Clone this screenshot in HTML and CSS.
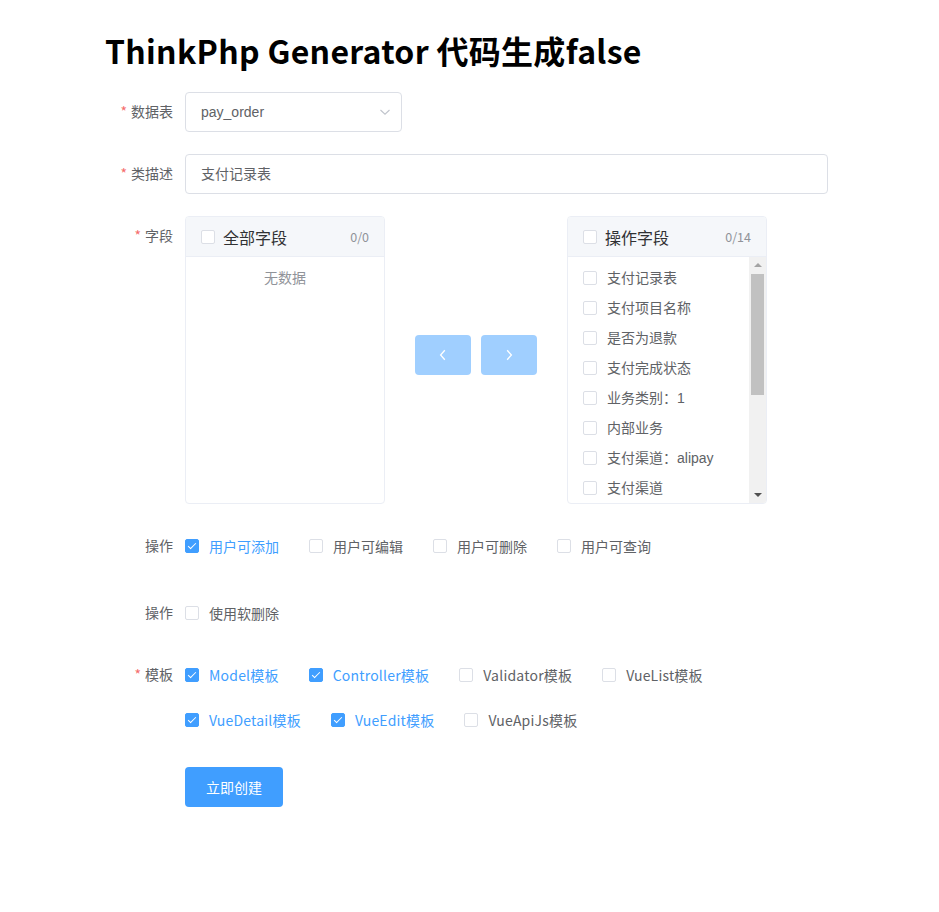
FILE: index.html
```html
<!DOCTYPE html>
<html>
<head>
<meta charset="utf-8">
<link rel="stylesheet" href="styles.css">
</head>
<body>
<div class="page">
  <h1 class="title">ThinkPhp Generator 代码生成false</h1>
  <form class="form">
    <div class="item">
      <label class="label"><span class="req">*</span>数据表</label>
      <div class="content">
        <div class="select">
          <span class="select-text">pay_order</span>
          <svg class="select-arrow" width="14" height="14" viewBox="0 0 14 14"><path d="M2.5 5 L7 9.2 L11.5 5" fill="none" stroke="#c0c4cc" stroke-width="1.1"/></svg>
        </div>
      </div>
    </div>
    <div class="item">
      <label class="label"><span class="req">*</span>类描述</label>
      <div class="content">
        <div class="input">支付记录表</div>
      </div>
    </div>
    <div class="item">
      <label class="label"><span class="req">*</span>字段</label>
      <div class="content">
        <div class="transfer">
          <div class="panel">
            <div class="panel-head">
              <span class="cb"></span><span class="head-title">全部字段</span><span class="count">0/0</span>
            </div>
            <div class="panel-body empty">无数据</div>
          </div>
          <div class="transfer-btns">
            <span class="tbtn"><svg width="14" height="14" viewBox="0 0 14 14"><path d="M8.8 2.3 L4.6 7 L8.8 11.7" fill="none" stroke="#fff" stroke-width="1.3"/></svg></span>
            <span class="tbtn"><svg width="14" height="14" viewBox="0 0 14 14"><path d="M5.2 2.3 L9.4 7 L5.2 11.7" fill="none" stroke="#fff" stroke-width="1.3"/></svg></span>
          </div>
          <div class="panel">
            <div class="panel-head">
              <span class="cb"></span><span class="head-title">操作字段</span><span class="count">0/14</span>
            </div>
            <div class="panel-body list">
              <div class="li"><span class="cb"></span>支付记录表</div>
              <div class="li"><span class="cb"></span>支付项目名称</div>
              <div class="li"><span class="cb"></span>是否为退款</div>
              <div class="li"><span class="cb"></span>支付完成状态</div>
              <div class="li"><span class="cb"></span>业务类别：1</div>
              <div class="li"><span class="cb"></span>内部业务</div>
              <div class="li"><span class="cb"></span>支付渠道：alipay</div>
              <div class="li"><span class="cb"></span>支付渠道</div>
              <div class="scrollbar">
                <span class="sb-arrow up"></span>
                <span class="sb-thumb"></span>
                <span class="sb-arrow down"></span>
              </div>
            </div>
          </div>
        </div>
      </div>
    </div>
    <div class="item item-ops">
      <label class="label">操作</label>
      <div class="content group">
        <span class="check on"><span class="cb on"></span>用户可添加</span>
        <span class="check"><span class="cb"></span>用户可编辑</span>
        <span class="check"><span class="cb"></span>用户可删除</span>
        <span class="check"><span class="cb"></span>用户可查询</span>
      </div>
    </div>
    <div class="item">
      <label class="label">操作</label>
      <div class="content group">
        <span class="check"><span class="cb"></span>使用软删除</span>
      </div>
    </div>
    <div class="item item-tpl">
      <label class="label"><span class="req">*</span>模板</label>
      <div class="content group wrap">
        <div class="row">
          <span class="check on"><span class="cb on"></span>Model模板</span>
          <span class="check on"><span class="cb on"></span>Controller模板</span>
          <span class="check"><span class="cb"></span>Validator模板</span>
          <span class="check"><span class="cb"></span>VueList模板</span>
        </div>
        <div class="row">
          <span class="check on"><span class="cb on"></span>VueDetail模板</span>
          <span class="check on"><span class="cb on"></span>VueEdit模板</span>
          <span class="check"><span class="cb"></span>VueApiJs模板</span>
        </div>
      </div>
    </div>
    <div class="item">
      <label class="label"></label>
      <div class="content">
        <span class="btn">立即创建</span>
      </div>
    </div>
  </form>
</div>
</body>
</html>
```
FILE: styles.css
```css
* { box-sizing: border-box; }
body {
  margin: 0;
  background: #fff;
  font-family: "Liberation Sans", "Noto Sans CJK SC", sans-serif;
  color: #606266;
  font-size: 14px;
}
.page {
  margin-left: 105px;
  width: 723px;
}
.title {
  margin: 30px 0 22px;
  font-size: 32px;
  line-height: 40px;
  font-weight: bold;
  color: #000;
  font-family: "Noto Sans CJK SC", "Liberation Sans", sans-serif;
  letter-spacing: 0.3px;
}
.form { margin: 0; }
.item {
  display: flex;
  margin-bottom: 22px;
}
.label {
  width: 80px;
  flex: none;
  text-align: right;
  padding-right: 12px;
  line-height: 39px;
  font-size: 14px;
  color: #606266;
  font-family: "Noto Sans CJK SC", sans-serif;
}
.req {
  color: #f56c6c;
  margin-right: 4px;
}
.content {
  flex: 1;
  min-width: 0;
}
.select {
  width: 217px;
  height: 40px;
  border: 1px solid #dcdfe6;
  border-radius: 4px;
  display: flex;
  align-items: center;
  justify-content: space-between;
  padding: 0 9px 0 15px;
}
.select-text { color: #606266; font-size: 14px; }
.input {
  height: 40px;
  border: 1px solid #dcdfe6;
  border-radius: 4px;
  line-height: 37px;
  padding: 0 15px;
  font-family: "Noto Sans CJK SC", sans-serif;
  color: #606266;
}
.transfer {
  display: flex;
  align-items: center;
}
.panel {
  width: 200px;
  height: 288px;
  border: 1px solid #ebeef5;
  border-radius: 4px;
  overflow: hidden;
  display: flex;
  flex-direction: column;
}
.panel-head {
  height: 40px;
  flex: none;
  background: #f5f7fa;
  border-bottom: 1px solid #ebeef5;
  display: flex;
  align-items: center;
  padding: 0 15px;
}
.head-title {
  font-size: 16px;
  line-height: 38px;
  color: #303133;
  margin-left: 8px;
  flex: 1;
  font-family: "Noto Sans CJK SC", sans-serif;
}
.count {
  font-size: 12.5px;
  color: #909399;
  font-family: "Noto Sans CJK SC", sans-serif;
}
.panel-body {
  flex: 1;
  position: relative;
  overflow: hidden;
}
.empty {
  text-align: center;
  color: #909399;
  line-height: 30px;
  padding-top: 5px;
  font-family: "Noto Sans CJK SC", sans-serif;
}
.list { padding-top: 6px; }
.li {
  height: 30px;
  line-height: 30px;
  padding-left: 15px;
  display: flex;
  align-items: center;
  font-family: "Liberation Sans", "Noto Sans CJK SC", sans-serif;
  color: #606266;
}
.li .cb { margin-right: 10px; }
.cb {
  width: 14px;
  height: 14px;
  border: 1px solid #dcdfe6;
  border-radius: 2px;
  background: #fff;
  flex: none;
  display: inline-block;
  position: relative;
}
.cb.on {
  background: #409eff;
  border-color: #409eff;
}
.cb.on::after {
  content: "";
  position: absolute;
  left: 4px;
  top: 1px;
  width: 3px;
  height: 7px;
  border: 1px solid #fff;
  border-left: 0;
  border-top: 0;
  transform: rotate(45deg);
}
.scrollbar {
  position: absolute;
  right: 0;
  top: 0;
  bottom: 0;
  width: 17px;
  background: #f1f1f1;
}
.sb-thumb {
  position: absolute;
  left: 2px;
  right: 2px;
  top: 17px;
  height: 121px;
  background: #c1c1c1;
}
.sb-arrow {
  position: absolute;
  left: 5px;
  width: 0;
  height: 0;
  border-left: 4px solid transparent;
  border-right: 4px solid transparent;
}
.sb-arrow.up {
  top: 6px;
  border-bottom: 4px solid #a3a3a3;
}
.sb-arrow.down {
  bottom: 6px;
  border-top: 4px solid #505050;
}
.transfer-btns {
  display: flex;
  gap: 10px;
  margin: 0 30px 10px;
}
.tbtn {
  width: 56px;
  height: 40px;
  border-radius: 4px;
  background: #a0cfff;
  display: flex;
  align-items: center;
  justify-content: center;
}
.group {
  display: flex;
  align-items: center;
  height: 40px;
}
.group.wrap {
  flex-direction: column;
  align-items: flex-start;
  height: auto;
}
.row {
  display: flex;
  align-items: center;
  height: 40px;
}
.row + .row { margin-top: 5px; }
.row .check { letter-spacing: 0.2px; }
.check {
  display: inline-flex;
  align-items: center;
  margin-right: 30px;
  font-size: 14px;
  color: #606266;
  font-family: "Noto Sans CJK SC", sans-serif;
}
.check .cb { margin-right: 10px; }
.check.on { color: #409eff; }
.item-ops { margin-bottom: 27px; }
.item-tpl { margin-bottom: 27px; }
.btn {
  display: inline-block;
  width: 98px;
  height: 40px;
  line-height: 40px;
  text-align: center;
  background: #409eff;
  color: #fff;
  border-radius: 4px;
  font-size: 14px;
  font-family: "Noto Sans CJK SC", sans-serif;
}
```
